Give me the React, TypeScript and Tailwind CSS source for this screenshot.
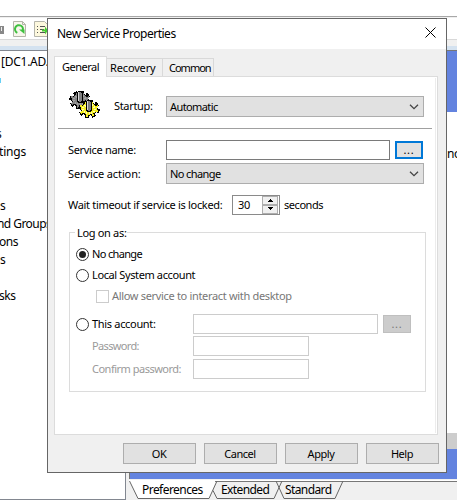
import type { ReactNode } from "react";

function Gear({ cx, cy, fill, alt }: { cx: number; cy: number; fill: string; alt: string }) {
  return (
    <g>
      <ellipse cx={cx} cy={cy} rx="8.6" ry="6.8" fill="none" stroke="#000" strokeWidth="4.6" strokeDasharray="3.6 2.4" />
      <ellipse cx={cx} cy={cy} rx="8.2" ry="6.2" fill={fill} stroke="#000" strokeWidth="1" />
      <ellipse cx={cx} cy={cy} rx="8.4" ry="6.5" fill="none" stroke={fill} strokeWidth="2.6" strokeDasharray="2 4" strokeDashoffset="-0.8" />
      <ellipse cx={cx} cy={cy} rx="6" ry="4.2" fill="none" stroke={alt} strokeWidth="2.4" strokeDasharray="1 1.4" />
      <path d={`M${cx - 3} ${cy + 1}V${cy - 8}h1v-1h3v1h1v9h-1v1h-3v-1z`} fill="#808080" stroke="#000" strokeWidth="1" />
      <path d={`M${cx - 1.5} ${cy - 8}v8.500`} stroke="#d8d8d8" strokeWidth="1" />
    </g>
  );
}

function GearsIcon() {
  return (
    <svg width="32" height="30" viewBox="0 0 32 30" shapeRendering="crispEdges" className="shrink-0">
      <Gear cx={12} cy={11} fill="#858585" alt="#a4a4a4" />
      <Gear cx={21} cy={20} fill="#f5ee20" alt="#ffffb0" />
    </svg>
  );
}

function Chevron() {
  return (
    <svg width="10" height="6" viewBox="0 0 10 6" className="mr-1">
      <path d="M1 .8 5 4.600 9 .8" fill="none" stroke="#444" strokeWidth="1.300" />
    </svg>
  );
}

function Select({ children }: { children: ReactNode }) {
  return (
    <div className="flex h-[21px] w-[258px] items-center justify-between border border-[#adadad] bg-[#e1e1e1] pl-[3px] tracking-[-0.6px]">
      {children}
      <Chevron />
    </div>
  );
}

function Radio({ checked = false }: { checked?: boolean }) {
  return (
    <span className="flex size-[13px] shrink-0 items-center justify-center rounded-full border border-[#333] bg-white">
      {checked && <span className="size-[7px] rounded-full bg-[#222]" />}
    </span>
  );
}

function PushButton({ children }: { children: ReactNode }) {
  return (
    <div className="flex h-[21px] w-[73px] items-center justify-center border border-[#adadad] bg-[#e1e1e1] pr-px tracking-[-0.45px]">
      {children}
    </div>
  );
}

const treeRows = [
  { text: "[DC1.AD.F", cls: "ml-px tracking-[-0.25px]" },
  { text: "", cls: "" },
  { text: "", cls: "" },
  { text: "", cls: "" },
  { text: "s", cls: "-ml-1" },
  { text: "tings", cls: "-ml-px tracking-[-0.2px]" },
  { text: "", cls: "" },
  { text: "", cls: "" },
  { text: "s", cls: "" },
  { text: "nd Groups", cls: "-ml-[3px] tracking-[-0.55px]" },
  { text: "ons", cls: "-ml-px tracking-[-0.45px]" },
  { text: "s", cls: "" },
  { text: "", cls: "" },
  { text: "sks", cls: "-ml-px tracking-[-0.4px]" },
];

function Background() {
  return (
    <div className="flex h-[500px] w-[457px] flex-col bg-[#f0f0f0] text-[12px] leading-[18px]">
      <div className="h-4 shrink-0 bg-white" />
      <div className="h-px shrink-0 bg-[#a8a8a8]" />
      <div className="flex h-[22px] shrink-0 items-start border-t border-[#f0f0f0] bg-white">
        <svg width="48" height="21" viewBox="0 0 48 21">
          <path d="M0 8h4v8H0z" fill="#888" />
          <path d="M1 9h1v4H1z" fill="#eee" />
          <path d="M13.500 3.500h9l3 3v12h-12z" fill="#f8f7ec" stroke="#b5b5aa" />
          <path d="M22.500 3.500v3h3" fill="none" stroke="#b5b5aa" />
          <path d="M17.300 14.800a4 4 0 1 1 5-1.400" fill="none" stroke="#3fc03f" strokeWidth="2" />
          <path d="M19 11.500h5.500v4.500z" fill="#3fc03f" />
          <path d="M34.500 3.500h10l3 3v12h-13z" fill="#fdf8dd" stroke="#b5b5aa" />
          <path d="M37 8.500h1m2 0h5M37 11.500h1m2 0h4M37 14.500h1m2 0h5" stroke="#555" />
          <path d="M42 11.500h3v-3l3 4-3 4v-3h-3z" fill="#46cc32" />
        </svg>
      </div>
      <div className="h-[7px] shrink-0 border-t border-[#d8d8d8] bg-[#f0f0f0]" />
      <div className="h-1 shrink-0 bg-[#d4e2f0]" />
      <div className="flex min-h-0 flex-1">
        <div className="flex w-[126px] shrink-0 flex-col overflow-hidden border-y border-r border-[#828790] bg-white pt-0.5">
          {treeRows.map((row, i) => (
            <div key={i} className="flex h-[18px] shrink-0">
              <span className={`shrink-0 whitespace-nowrap ${row.cls}`}>{row.text}</span>
              {i === 1 && <span className="mt-[7px] h-[5px] w-px bg-[#66d0f5]" />}
            </div>
          ))}
        </div>
        <div className="ml-[3px] flex min-w-0 flex-1 flex-col">
          <div className="h-[62px] shrink-0 border-l border-t border-[#777] bg-[#6383df]" />
          <div className="flex h-[321px] shrink-0 bg-white pl-[318px] pt-[33px]">
            <span className="tracking-[-0.4px]">no</span>
          </div>
          <div className="h-4 shrink-0 bg-[#cdcdcd]" />
          <div className="h-[30px] shrink-0 border-l border-[#777] bg-[#6383df]" />
          <div className="h-px shrink-0 bg-[#f0f0f0]" />
          <div className="relative h-5 shrink-0">
            <svg width="328" height="20" viewBox="0 0 328 20" className="absolute left-0 top-0">
              <path d="M0 0H328V1.500H0z" fill="#fff" />
              <path d="M0 1 9 18.500H80L87 1z" fill="#fff" />
              <path d="M86 1.500H328" stroke="#777" />
              <path d="M.5 1 9 18.500H80L88 1M84 10.500 88 18.500H145L153 1M147 1 155 18.500H206L214 1" fill="none" stroke="#666" />
            </svg>
            <div className="relative flex pl-[13px] pt-px">
              <span className="w-[79px] tracking-[-0.55px]">Preferences</span>
              <span className="w-[64px] tracking-[-0.6px]">Extended</span>
              <span className="tracking-[-0.6px]">Standard</span>
            </div>
          </div>
        </div>
      </div>
    </div>
  );
}

function Tabs() {
  return (
    <div className="flex h-5 items-end pl-[6px]">
      <div className="z-10 -mb-px flex h-[21px] w-[53px] items-center border border-b-0 border-[#dcdcdc] bg-white pl-[7px] tracking-[-0.5px]">General</div>
      <div className="flex h-[18px] w-[56px] items-center border-r border-t border-[#d9d9d9] pl-[3px] tracking-[-0.15px]">Recovery</div>
      <div className="flex h-[18px] w-[51px] items-center border-r border-t border-[#d9d9d9] pl-[6px] tracking-[-1px]">Common</div>
    </div>
  );
}

function AccountBox() {
  return (
    <div className="ml-[14px] mt-[17px] flex h-[160px] w-[357px] flex-col border border-[#dcdcdc]">
      <div className="-mt-2 ml-[5px] flex h-4 w-[52px] items-center bg-white pl-0.5">Log on as:</div>
      <div className="mt-[5px] flex h-4 items-center gap-[3px] pl-[6px] tracking-[-0.65px]">
        <Radio checked />
        No change
      </div>
      <div className="mt-[5px] flex h-4 items-center gap-[3px] pl-[6px] tracking-[-0.38px]">
        <Radio />
        Local System account
      </div>
      <div className="mt-[5px] flex h-4 items-center gap-[3px] pl-[26px] text-[#777]">
        <span className="size-[13px] border border-[#ccc]" />
        Allow service to interact with desktop
      </div>
      <div className="mt-[10px] flex h-5 items-center pl-[6px]">
        <div className="flex w-[117px] items-center gap-[3px]">
          <Radio />
          This account:
        </div>
        <span className="h-5 w-[185px] border border-[#ccc]" />
        <span className="ml-[5px] flex h-[18px] w-7 items-center justify-center border border-[#bfbfbf] bg-[#ccc] text-[#777] tracking-[0.8px]">...</span>
      </div>
      <div className="mt-0.5 flex h-5 items-center pl-[22px] text-[#9a9a9a]">
        <span className="w-[101px] tracking-[-0.65px]">Password:</span>
        <span className="h-5 w-[116px] border border-[#ccc]" />
      </div>
      <div className="mt-[3px] flex h-5 items-center pl-[22px] text-[#9a9a9a]">
        <span className="w-[101px] tracking-[-0.5px]">Confirm password:</span>
        <span className="h-5 w-[116px] border border-[#ccc]" />
      </div>
    </div>
  );
}

function Dialog() {
  return (
    <div className="absolute left-[47px] top-[18px] flex h-[455px] w-[400px] flex-col border border-[#666] bg-[#f0f0f0] text-[11px] leading-4 tracking-[-0.32px]">
      <div className="flex h-[30px] shrink-0 items-center justify-between bg-white pl-[9px] pr-[10px] text-[12px] tracking-[-0.5px]">
        <span>New Service Properties</span>
        <svg width="11" height="11" viewBox="0 0 11 11" className="-mt-[3px]">
          <path d="M.5.5l10 10m0-10-10 10" stroke="#000" />
        </svg>
      </div>
      <div className="h-[7px] shrink-0" />
      <Tabs />
      <div className="ml-[6px] flex h-[359px] w-[384px] shrink-0 border border-[#dcdcdc] bg-white py-px pr-px">
        <div className="flex w-full flex-col border-r border-[#ececec]">
          <div className="flex h-[50px] items-start">
            <div className="ml-[13px] mt-[11px] w-[46px]">
              <GearsIcon />
            </div>
            <span className="mt-5 w-[52px]">Startup:</span>
            <div className="mt-[18px]">
              <Select>Automatic</Select>
            </div>
          </div>
          <div className="ml-[3px] h-px w-[374px] bg-[#a0a0a0]" />
          <div className="mt-[11px] flex h-5 items-center">
            <span className="w-[111px] pl-[13px]">Service name:</span>
            <span className="h-5 w-[224px] border border-[#7a7a7a]" />
            <span className="ml-[5px] flex h-[18px] w-7 items-center justify-center border-2 border-[#0078d7] bg-[#e1e1e1] tracking-[0.8px]">...</span>
          </div>
          <div className="mt-[3px] flex h-[21px] items-center">
            <span className="w-[111px] pl-[13px] tracking-[-0.1px]">Service action:</span>
            <Select>No change</Select>
          </div>
          <div className="mt-[11px] flex h-5 items-center">
            <span className="w-[177px] pl-[13px]">Wait timeout if service is locked:</span>
            <div className="flex h-5 w-12 items-center justify-between border border-[#8a8a8a] pl-[5px]">
              <span>30</span>
              <svg width="17" height="18" viewBox="0 0 17 18" shapeRendering="crispEdges">
                <path d="M.5.5h15v8H.5zM.5 9.500h15v8H.5z" fill="#f0f0f0" stroke="#adadad" />
                <path d="M8 3 5 6h6zM5 11h6l-3 3z" fill="#000" />
              </svg>
            </div>
            <span className="ml-1 tracking-[-0.45px]">seconds</span>
          </div>
          <AccountBox />
        </div>
      </div>
      <div className="mt-2 flex gap-2 pl-[75px]">
        <PushButton>OK</PushButton>
        <PushButton>Cancel</PushButton>
        <PushButton>Apply</PushButton>
        <PushButton>Help</PushButton>
      </div>
    </div>
  );
}

export default function App() {
  return (
    <div className="relative h-[500px] w-[457px] overflow-hidden whitespace-nowrap font-['Noto_Sans',sans-serif] text-black">
      <Background />
      <Dialog />
    </div>
  );
}
